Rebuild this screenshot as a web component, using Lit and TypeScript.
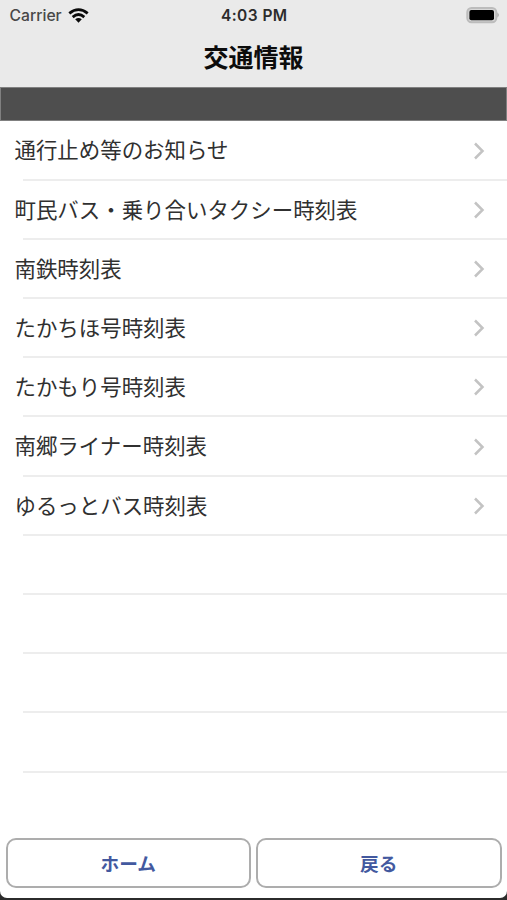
import { LitElement, html, css, svg } from "lit";
import { customElement, property } from "lit/decorators.js";

const ROUTES = [
  "通行止め等のお知らせ",
  "町民バス・乗り合いタクシー時刻表",
  "南鉄時刻表",
  "たかちほ号時刻表",
  "たかもり号時刻表",
  "南郷ライナー時刻表",
  "ゆるっとバス時刻表",
];
const EMPTY_ROWS = 4;

@customElement("status-bar")
class StatusBar extends LitElement {
  static styles = css`
    :host {
      display: grid;
      grid-template-columns: 1fr auto 1fr;
      align-items: center;
      height: 29px;
      padding: 0 7px 0 9.5px;
      font-family: Inter, "Liberation Sans", sans-serif;
      font-size: 16px;
      line-height: 30px;
      color: #484848;
    }
    .carrier { display: flex; align-items: center; gap: 6px; }
    .carrier span { font-size: 15.7px; font-weight: 500; }
    .time { font-weight: 600; color: #2c2c2c; font-size: 15.5px; letter-spacing: 0.45px; padding: 1px 1px 0 0; }
    .battery { display: flex; justify-content: flex-end; }
    svg { display: block; }
  `;
  render() {
    return html`
      <div class="carrier">
        <span>Carrier</span>
        <svg width="21" height="15" viewBox="0 0 21 15">
          ${svg`<g fill="none" stroke="#0a0a0a" stroke-width="2.8">
            <path d="M1.3 5.4Q10.5 -2.2 19.7 5.4" />
            <path d="M4.7 9.1Q10.5 4 16.3 9.1" />
          </g>
          <path d="M7.2 11.3Q10.5 8.8 13.8 11.3L10.5 14.8Z" fill="#0a0a0a" />`}
        </svg>
      </div>
      <div class="time">4:03 PM</div>
      <div class="battery">
        <svg width="34" height="17" viewBox="0 0 34 17">
          <rect x="1.3" y="1" width="29" height="14.2" rx="4.2" fill="#d8d8d8" stroke="#bcbcbc" stroke-width="2" />
          <rect x="3.4" y="2.9" width="24.6" height="10.4" rx="2" fill="#000" />
          <path d="M31.4 5.6Q34.4 8.1 31.4 10.6Z" fill="#aaa" />
        </svg>
      </div>
    `;
  }
}

@customElement("menu-row")
class MenuRow extends LitElement {
  @property() label = "";
  static styles = css`
    :host { display: flex; flex-direction: column; height: 59.2px; }
    .content {
      flex: 1;
      display: flex;
      align-items: center;
      justify-content: space-between;
      padding: 0 22px 0 14.5px;
    }
    .label {
      padding-bottom: 1.4px;
      font-size: 21.45px;
      line-height: 30px;
      color: #303030;
      white-space: nowrap;
    }
    .line { height: 2px; margin-left: 23px; background: #ededed; }
    svg { display: block; padding-top: 1px; }
  `;
  render() {
    return html`
      <div class="content">
        ${this.label
          ? html`<span class="label">${this.label}</span>
              <svg width="12" height="18" viewBox="0 0 12 18">
                <path d="M2 1.5L9.5 9L2 16.5" fill="none" stroke="#c3c3c3" stroke-width="2.5" />
              </svg>`
          : ""}
      </div>
      <div class="line"></div>
    `;
  }
}

@customElement("app-root")
class AppRoot extends LitElement {
  static styles = css`
    :host {
      display: block;
      height: 900px;
      overflow: hidden;
      background: #2b2b2b;
      font-family: "Noto Sans CJK JP", sans-serif;
    }
    .screen {
      display: flex;
      flex-direction: column;
      height: 898px;
      background: #fff;
      border-radius: 0 0 7px 7px;
      overflow: hidden;
    }
    header { background: #eaeaea; height: 87px; flex: none; }
    h1 {
      margin: 0;
      padding-top: 8px;
      font-size: 25px;
      line-height: 38px;
      font-weight: 700;
      text-align: center;
      color: #0c0c0c;
    }
    .band {
      flex: none;
      box-sizing: border-box;
      height: 34px;
      background: #4e4e4e;
      border: 1px solid #808080;
    }
    .list { flex: 1; padding-top: 0.5px; }
    footer {
      flex: none;
      display: grid;
      grid-template-columns: 1fr 1fr;
      gap: 5px;
      padding: 0 5.5px 10px 5.5px;
    }
    button {
      height: 50px;
      padding: 0;
      border: 2px solid #adadad;
      border-radius: 10px;
      background: #fff;
      color: #43599f;
      font: 700 18.7px/46px "Noto Sans CJK JP", sans-serif;
    }
  `;
  render() {
    return html`
      <div class="screen">
        <header>
          <status-bar></status-bar>
          <h1>交通情報</h1>
        </header>
        <div class="band"></div>
        <div class="list">
          ${ROUTES.map((label) => html`<menu-row .label=${label}></menu-row>`)}
          ${Array.from({ length: EMPTY_ROWS }, () => html`<menu-row></menu-row>`)}
        </div>
        <footer>
          <button>ホーム</button>
          <button>戻る</button>
        </footer>
      </div>
    `;
  }
}
